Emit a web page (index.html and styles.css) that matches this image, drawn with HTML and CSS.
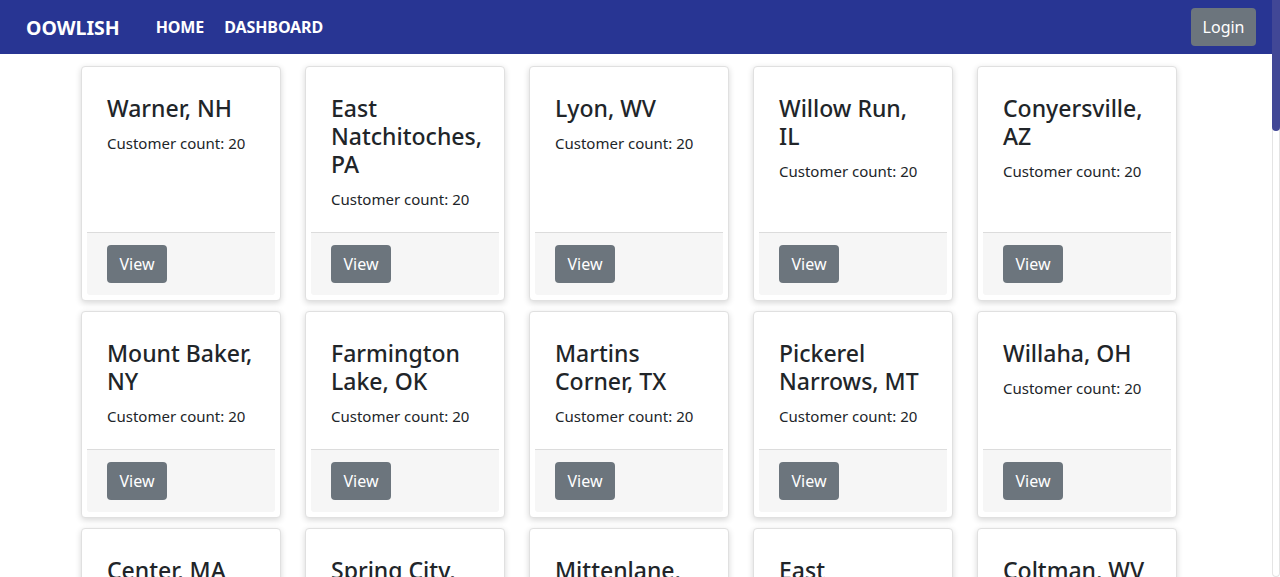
FILE: index.html
```html
<!DOCTYPE html>
<html lang="en">
<head>
<meta charset="utf-8">
<title>Oowlish</title>
<link rel="stylesheet" href="styles.css">
</head>
<body>
<div class="page">
<header class="navbar">
  <a class="brand" href="#">OOWLISH</a>
  <nav class="nav-links">
    <a href="#">HOME</a>
    <a href="#">DASHBOARD</a>
  </nav>
  <button class="btn login">Login</button>
</header>
<main class="container">
  <div class="grid">
    <div class="card"><div class="card-body"><h4>Warner, NH</h4><p>Customer count: 20</p></div><div class="card-footer"><button class="btn">View</button></div></div>
    <div class="card"><div class="card-body"><h4>East Natchitoches, PA</h4><p>Customer count: 20</p></div><div class="card-footer"><button class="btn">View</button></div></div>
    <div class="card"><div class="card-body"><h4>Lyon, WV</h4><p>Customer count: 20</p></div><div class="card-footer"><button class="btn">View</button></div></div>
    <div class="card"><div class="card-body"><h4>Willow Run, IL</h4><p>Customer count: 20</p></div><div class="card-footer"><button class="btn">View</button></div></div>
    <div class="card"><div class="card-body"><h4>Conyersville, AZ</h4><p>Customer count: 20</p></div><div class="card-footer"><button class="btn">View</button></div></div>

    <div class="card"><div class="card-body"><h4>Mount Baker, NY</h4><p>Customer count: 20</p></div><div class="card-footer"><button class="btn">View</button></div></div>
    <div class="card"><div class="card-body"><h4>Farmington Lake, OK</h4><p>Customer count: 20</p></div><div class="card-footer"><button class="btn">View</button></div></div>
    <div class="card"><div class="card-body"><h4>Martins Corner, TX</h4><p>Customer count: 20</p></div><div class="card-footer"><button class="btn">View</button></div></div>
    <div class="card"><div class="card-body"><h4>Pickerel Narrows, MT</h4><p>Customer count: 20</p></div><div class="card-footer"><button class="btn">View</button></div></div>
    <div class="card"><div class="card-body"><h4>Willaha, OH</h4><p>Customer count: 20</p></div><div class="card-footer"><button class="btn">View</button></div></div>

    <div class="card"><div class="card-body"><h4>Center, MA</h4><p>Customer count: 20</p></div><div class="card-footer"><button class="btn">View</button></div></div>
    <div class="card"><div class="card-body"><h4>Spring City, UT</h4><p>Customer count: 20</p></div><div class="card-footer"><button class="btn">View</button></div></div>
    <div class="card"><div class="card-body"><h4>Mittenlane, KY</h4><p>Customer count: 20</p></div><div class="card-footer"><button class="btn">View</button></div></div>
    <div class="card"><div class="card-body"><h4>East Stroudsburg, PA</h4><p>Customer count: 20</p></div><div class="card-footer"><button class="btn">View</button></div></div>
    <div class="card"><div class="card-body"><h4>Coltman, WV</h4><p>Customer count: 20</p></div><div class="card-footer"><button class="btn">View</button></div></div>

    <div class="card"><div class="card-body"><h4>Oak Ridge, TN</h4><p>Customer count: 20</p></div><div class="card-footer"><button class="btn">View</button></div></div>
    <div class="card"><div class="card-body"><h4>Bellmont, VT</h4><p>Customer count: 20</p></div><div class="card-footer"><button class="btn">View</button></div></div>
    <div class="card"><div class="card-body"><h4>Cedar Falls, IA</h4><p>Customer count: 20</p></div><div class="card-footer"><button class="btn">View</button></div></div>
    <div class="card"><div class="card-body"><h4>Harmony, ME</h4><p>Customer count: 20</p></div><div class="card-footer"><button class="btn">View</button></div></div>
    <div class="card"><div class="card-body"><h4>Red Hill, NC</h4><p>Customer count: 20</p></div><div class="card-footer"><button class="btn">View</button></div></div>

    <div class="card"><div class="card-body"><h4>Stony Point, SC</h4><p>Customer count: 20</p></div><div class="card-footer"><button class="btn">View</button></div></div>
    <div class="card"><div class="card-body"><h4>Glenwood, MN</h4><p>Customer count: 20</p></div><div class="card-footer"><button class="btn">View</button></div></div>
    <div class="card"><div class="card-body"><h4>Pine Bluff, AR</h4><p>Customer count: 20</p></div><div class="card-footer"><button class="btn">View</button></div></div>
    <div class="card"><div class="card-body"><h4>Kingsland, GA</h4><p>Customer count: 20</p></div><div class="card-footer"><button class="btn">View</button></div></div>
    <div class="card"><div class="card-body"><h4>Silver Lake, WI</h4><p>Customer count: 20</p></div><div class="card-footer"><button class="btn">View</button></div></div>

    <div class="card"><div class="card-body"><h4>Fairview, OR</h4><p>Customer count: 20</p></div><div class="card-footer"><button class="btn">View</button></div></div>
    <div class="card"><div class="card-body"><h4>Laurel Hill, FL</h4><p>Customer count: 20</p></div><div class="card-footer"><button class="btn">View</button></div></div>
    <div class="card"><div class="card-body"><h4>Bristol, RI</h4><p>Customer count: 20</p></div><div class="card-footer"><button class="btn">View</button></div></div>
    <div class="card"><div class="card-body"><h4>Clearwater, KS</h4><p>Customer count: 20</p></div><div class="card-footer"><button class="btn">View</button></div></div>
    <div class="card"><div class="card-body"><h4>Mesa Verde, CO</h4><p>Customer count: 20</p></div><div class="card-footer"><button class="btn">View</button></div></div>

    <div class="card"><div class="card-body"><h4>Ashford, WA</h4><p>Customer count: 20</p></div><div class="card-footer"><button class="btn">View</button></div></div>
    <div class="card"><div class="card-body"><h4>Brookside, NJ</h4><p>Customer count: 20</p></div><div class="card-footer"><button class="btn">View</button></div></div>
    <div class="card"><div class="card-body"><h4>Dover Plains, NY</h4><p>Customer count: 20</p></div><div class="card-footer"><button class="btn">View</button></div></div>
    <div class="card"><div class="card-body"><h4>Elk Grove, CA</h4><p>Customer count: 20</p></div><div class="card-footer"><button class="btn">View</button></div></div>
    <div class="card"><div class="card-body"><h4>Franklin, LA</h4><p>Customer count: 20</p></div><div class="card-footer"><button class="btn">View</button></div></div>

    <div class="card"><div class="card-body"><h4>Greenville, MS</h4><p>Customer count: 20</p></div><div class="card-footer"><button class="btn">View</button></div></div>
    <div class="card"><div class="card-body"><h4>Hillsboro, ND</h4><p>Customer count: 20</p></div><div class="card-footer"><button class="btn">View</button></div></div>
    <div class="card"><div class="card-body"><h4>Ironton, MO</h4><p>Customer count: 20</p></div><div class="card-footer"><button class="btn">View</button></div></div>
    <div class="card"><div class="card-body"><h4>Jasper, AL</h4><p>Customer count: 20</p></div><div class="card-footer"><button class="btn">View</button></div></div>
    <div class="card"><div class="card-body"><h4>Kent, DE</h4><p>Customer count: 20</p></div><div class="card-footer"><button class="btn">View</button></div></div>

    <div class="card"><div class="card-body"><h4>Lakeview, NE</h4><p>Customer count: 20</p></div><div class="card-footer"><button class="btn">View</button></div></div>
    <div class="card"><div class="card-body"><h4>Milford, NH</h4><p>Customer count: 20</p></div><div class="card-footer"><button class="btn">View</button></div></div>
    <div class="card"><div class="card-body"><h4>Newport, KY</h4><p>Customer count: 20</p></div><div class="card-footer"><button class="btn">View</button></div></div>
    <div class="card"><div class="card-body"><h4>Orchard Park, NY</h4><p>Customer count: 20</p></div><div class="card-footer"><button class="btn">View</button></div></div>
    <div class="card"><div class="card-body"><h4>Palmer, AK</h4><p>Customer count: 20</p></div><div class="card-footer"><button class="btn">View</button></div></div>
  </div>
</main>
</div>
<div class="scroll-rail"><div class="scroll-thumb"></div></div>
</body>
</html>
```

FILE: styles.css
```css
* { box-sizing: border-box; }

body {
  margin: 0;
  display: flex;
  align-items: flex-start;
  font-family: "Noto Sans", "Open Sans", sans-serif;
  color: #212529;
  background: #ffffff;
}

.page {
  flex: 1;
  min-width: 0;
}

.scroll-rail {
  position: sticky;
  top: 0;
  width: 8px;
  height: 100vh;
  flex: none;
  background: #ffffff;
  border-left: 1px solid #e4e4e4;
  border-right: 1px solid #e4e4e4;
  border-bottom: 1px solid #e4e4e4;
  border-radius: 0 0 4px 4px;
}

.scroll-thumb {
  height: 131px;
  margin: 0 -1px;
  background: #414796;
  border-radius: 0 0 4px 4px;
}

.navbar {
  height: 54px;
  background: #283593;
  display: flex;
  align-items: center;
  padding: 0 16px 0 26px;
}

.brand {
  color: #ffffff;
  text-decoration: none;
  font-weight: 700;
  font-size: 19.5px;
  margin-right: 36px;
}

.nav-links {
  display: flex;
  gap: 20px;
  flex: 1;
}

.nav-links a {
  color: #ffffff;
  text-decoration: none;
  font-weight: 700;
  font-size: 16px;
  letter-spacing: -0.1px;
}

.btn {
  font-family: inherit;
  font-size: 16px;
  line-height: 26px;
  color: #ffffff;
  background: #6c757d;
  border: none;
  border-radius: 4px;
  padding: 6px 12px;
  cursor: pointer;
}

.card-footer .btn {
  padding: 6px 12.5px;
}

.login {
  padding: 6px 11.5px;
}

.container {
  max-width: 1140px;
  margin: 0 auto;
  padding: 12px 15px;
}

.grid {
  display: grid;
  grid-template-columns: repeat(5, 200px);
  column-gap: 24px;
  row-gap: 10px;
}

.card {
  display: flex;
  flex-direction: column;
  border: 1px solid #e0e0e0;
  border-radius: 4px;
  padding: 5px;
  background: #ffffff;
  box-shadow: 0 2px 6px rgba(0, 0, 0, 0.16);
}

.card-body {
  flex: 1;
  padding: 22px 20px 22px 20px;
}

.card-body h4 {
  margin: 0 0 10px;
  font-size: 23px;
  font-weight: 500;
  line-height: 28px;
}

.card-body p {
  margin: 0;
  font-size: 15px;
  line-height: 22px;
}

.card-footer {
  background: #f6f6f6;
  border-top: 1px solid #dcdcdc;
  border-radius: 0 0 3px 3px;
  padding: 12px 20px;
}
```
